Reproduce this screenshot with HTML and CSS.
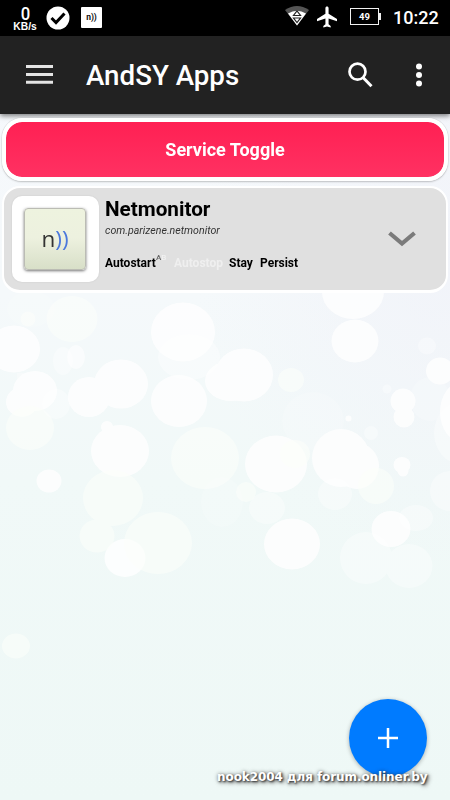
FILE: index.html
```html
<!DOCTYPE html>
<html lang="en">
<head>
<meta charset="utf-8">
<title>AndSY Apps</title>
<link rel="stylesheet" href="styles.css">
</head>
<body>
<div class="screen">
  <svg class="bokeh" viewBox="0 0 450 800" aria-hidden="true">
    <g fill="#fff">
      <g opacity=".8">
        <ellipse cx="14" cy="349" rx="26" ry="23.500"/>
        <path d="M17 373h21v15H17z" opacity=".4"/>
        <ellipse cx="183" cy="332" rx="32" ry="29.500"/>
        <ellipse cx="179" cy="401" rx="28" ry="26"/>
        <ellipse cx="244" cy="375" rx="29" ry="26.500"/>
        <ellipse cx="231" cy="381" rx="26" ry="20"/>
        <ellipse cx="355" cy="341" rx="23.500" ry="21.500"/>
        <ellipse cx="353" cy="292" rx="31" ry="27"/>
        <ellipse cx="120" cy="451" rx="29" ry="26"/>
        <circle cx="107" cy="427" r="6"/>
        <ellipse cx="49" cy="481" rx="12.500" ry="11.500"/>
        <ellipse cx="121" cy="384" rx="27" ry="24.500"/>
        <ellipse cx="89" cy="397" rx="21" ry="20"/>
        <ellipse cx="35" cy="391" rx="22" ry="20"/>
        <ellipse cx="22" cy="402" rx="16" ry="15"/>
        <ellipse cx="276" cy="464" rx="31" ry="28.500"/>
        <ellipse cx="341" cy="458" rx="29" ry="29"/>
        <ellipse cx="357" cy="466" rx="22" ry="23"/>
        <ellipse cx="403" cy="401" rx="12.500" ry="12.500"/>
        <ellipse cx="404" cy="417" rx="10.500" ry="10.500"/>
        <ellipse cx="402" cy="465" rx="8.500" ry="8"/>
        <circle cx="403" cy="471" r="5.500"/>
        <ellipse cx="440" cy="371" rx="14" ry="13.500"/>
        <ellipse cx="462" cy="412" rx="22" ry="30"/>
        <circle cx="348.500" cy="418.500" r="3"/>
        <ellipse cx="292" cy="544" rx="28" ry="25.500"/>
        <ellipse cx="391" cy="529" rx="19.500" ry="18"/>
        <ellipse cx="125" cy="558" rx="20.500" ry="19"/>
        <ellipse cx="76" cy="357" rx="9" ry="12" opacity=".7"/>
      </g>
      <g fill="#fcfffb" opacity=".6">
        <ellipse cx="72" cy="319" rx="25.500" ry="23"/>
        <ellipse cx="30" cy="428" rx="24" ry="22"/>
        <ellipse cx="205" cy="458" rx="34" ry="31"/>
        <ellipse cx="158" cy="543" rx="34" ry="31"/>
        <ellipse cx="113" cy="498" rx="30" ry="28"/>
        <ellipse cx="97" cy="536" rx="17.500" ry="16.500"/>
        <ellipse cx="16" cy="646" rx="14" ry="12.500"/>
        <ellipse cx="291" cy="380" rx="13" ry="12"/>
        <ellipse cx="376" cy="486" rx="18" ry="18"/>
        <circle cx="246" cy="492" r="10"/>
        <circle cx="28" cy="319" r="7.500"/>
        <ellipse cx="295" cy="454" rx="15" ry="14"/>
      </g>
      <g opacity=".36">
        <ellipse cx="63" cy="361" rx="10" ry="14"/>
        <ellipse cx="189" cy="357" rx="31" ry="23"/>
        <ellipse cx="56" cy="404" rx="14" ry="15"/>
        <ellipse cx="313" cy="421" rx="31" ry="29" opacity=".45"/>
        <ellipse cx="427" cy="346" rx="9" ry="8.500"/>
        <ellipse cx="430" cy="399" rx="20" ry="22" opacity=".6"/>
        <ellipse cx="461" cy="433" rx="27" ry="31"/>
        <circle cx="371" cy="433" r="7"/>
        <circle cx="387" cy="389" r="4.500"/>
        <ellipse cx="267" cy="508" rx="18" ry="16"/>
        <ellipse cx="335" cy="494" rx="17" ry="16"/>
        <ellipse cx="366" cy="558" rx="26" ry="26"/>
        <ellipse cx="409" cy="566" rx="23.500" ry="22"/>
        <ellipse cx="416" cy="518" rx="17" ry="13"/>
        <ellipse cx="450" cy="491" rx="20" ry="20"/>
        <ellipse cx="222" cy="502" rx="21" ry="25" opacity=".45"/>
        <ellipse cx="31" cy="309" rx="24" ry="18" opacity=".45"/>
      </g>
    </g>
  </svg>

  <header class="status">
    <div class="speed"><span class="speed-num">0</span><span class="speed-unit">KB/s</span></div>
    <svg class="check" viewBox="0 0 24 24"><circle cx="12" cy="12" r="11.500" fill="#fff"/><path d="M5.500 12l4.500 4.500 8.500-9" fill="none" stroke="#000" stroke-width="3"/></svg>
    <div class="mini">n))</div>
    <svg class="wifi" viewBox="0 0 24 20"><path d="M0 4Q12-4 24 4L12 19.500z" fill="#555"/><path d="M3 7.500Q12 2 21 7.500L12 19.500z" fill="#fff"/><path d="M8.500 9.500h7L12 5zM8.500 12h7L12 16.500z" fill="#fff" stroke="#222" stroke-width="1.200"/></svg>
    <svg class="plane" viewBox="2 2 19 20"><path fill="#fff" d="M21 16v-2l-8-5V3.500c0-.83-.67-1.500-1.500-1.500S10 2.670 10 3.500V9l-8 5v2l8-2.500V19l-2 1.500V22l3.500-1 3.500 1v-1.500L13 19v-5.500l8 2.500z"/></svg>
    <div class="battery">49</div>
    <div class="clock">10:22</div>
  </header>

  <nav class="appbar">
    <svg class="menu" viewBox="0 0 27 19"><path d="M0 1.500h27M0 9.500h27M0 17.300h27" stroke="#e4e4e4" stroke-width="3"/></svg>
    <h1 class="title">AndSY Apps</h1>
    <svg class="search" viewBox="0 0 25 26"><circle cx="9.500" cy="9.700" r="8" fill="none" stroke="#fff" stroke-width="2.700"/><path d="M15 15.500l8.500 8.700" stroke="#fff" stroke-width="3"/></svg>
    <svg class="more" viewBox="0 0 6 24"><circle cx="3" cy="3.500" r="3" fill="#fff"/><circle cx="3" cy="12" r="3" fill="#fff"/><circle cx="3" cy="20.500" r="3" fill="#fff"/></svg>
  </nav>

  <main class="content">
    <button class="toggle">Service Toggle</button>
    <section class="card">
      <div class="tile"><div class="app-icon">n<span class="waves">))</span></div></div>
      <div class="info">
        <h2 class="name">Netmonitor</h2>
        <p class="package">com.parizene.netmonitor</p>
        <div class="flags">
          <span class="start">Autostart</span><span class="sup">A<span class="sup-off">B</span></span>
          <span class="stop">Autostop</span><span class="stay">Stay</span><span class="persist">Persist</span>
        </div>
      </div>
      <svg class="chevron" viewBox="0 0 28 16"><path d="M1.500 2L14 12.500 26.500 2" fill="none" stroke="#7b7b7b" stroke-width="4.200"/></svg>
    </section>
  </main>

  <button class="fab" aria-label="Add"><svg class="plus" viewBox="0 0 20 20"><path d="M10 0v20M0 10h20" stroke="#fff" stroke-width="2.500"/></svg></button>
  <div class="credit">nook2004 для forum.onliner.by</div>
</div>
</body>
</html>
```

FILE: styles.css
```css
* { box-sizing: border-box; }
body { margin: 0; font-family: Roboto, sans-serif; }
svg { display: block; flex: none; }
button { border: 0; padding: 0; font-family: inherit; }

.screen {
  position: relative;
  width: 450px;
  height: 800px;
  overflow: hidden;
  background:
    radial-gradient(ellipse at 100% 32%, rgba(241, 243, 249, .9), rgba(241, 243, 249, 0) 40%),
    linear-gradient(180deg, #f6f8fc 0%, #f5f9fb 37%, #f1f9f8 60%, #eef8f6 100%);
}
.bokeh { position: absolute; left: 0; top: 0; width: 450px; height: 800px; }

.status {
  position: relative;
  display: flex;
  height: 36px;
  background: #000;
  color: #fff;
}
.speed { display: flex; flex-direction: column; align-items: center; width: 26px; margin-left: 12px; }
.speed-num { font-size: 19px; line-height: 15px; height: 15px; margin-top: 6px; font-weight: 500; transform: scaleX(.88); }
.speed-unit { margin-top: 1px; font: bold 10.300px/10px "Liberation Sans", sans-serif; white-space: nowrap; }
.check { width: 24px; height: 24px; margin: 6px 0 0 8px; }
.mini {
  width: 21px;
  height: 21px;
  margin: 7px 0 0 11px;
  border-radius: 1px;
  background: #fff;
  color: #111;
  font-size: 8.500px;
  font-weight: 700;
  line-height: 20px;
  text-align: center;
}
.wifi { width: 24px; height: 20px; margin: 6px 0 0 183px; }
.plane { width: 20px; height: 22px; margin: 6px 0 0 8px; }
.battery {
  position: relative;
  width: 29px;
  height: 17px;
  margin: 8px 0 0 13px;
  border: 1.500px solid #f2f2f2;
  font-size: 9.500px;
  font-weight: 700;
  line-height: 15px;
  text-align: center;
}
.battery::after { content: ""; position: absolute; right: -3px; top: 4px; width: 2px; height: 7px; background: #eee; }
.clock { margin: 6px 0 0 14px; font-size: 18px; line-height: 24px; font-weight: 500; }

.appbar {
  position: relative;
  display: flex;
  align-items: center;
  height: 78px;
  background: #222;
  box-shadow: 0 2px 5px rgba(0, 0, 0, .5);
}
.menu { width: 27px; height: 19px; margin-left: 26px; margin-top: -1px; }
.title { width: 230px; margin: 2px 0 0 33px; color: #fff; font-size: 27.700px; line-height: 36px; font-weight: 500; white-space: nowrap; }
.search { width: 25px; height: 26px; margin: -1px 0 0 32px; }
.more { width: 6px; height: 24px; margin: 0 0 0 43px; }

.content { position: relative; padding: 4px 2px 0; }
.toggle {
  display: block;
  width: 446px;
  height: 63px;
  border: 4px solid #fff;
  border-radius: 20px;
  background: linear-gradient(#ff2053, #ff3162) padding-box;
  box-shadow: 0 0 1px rgba(0, 0, 0, .35), 0 1px 2px rgba(0, 0, 0, .2);
  color: #fff;
  font-size: 18px;
  line-height: 56px;
  font-weight: 700;
}
.card {
  display: flex;
  height: 107px;
  margin-top: 5px;
  border: 2px solid #fff;
  border-bottom-width: 3px;
  border-radius: 18px;
  background: #e0e0e0;
}
.tile {
  display: flex;
  align-items: center;
  justify-content: center;
  flex: none;
  width: 87px;
  height: 86px;
  margin: 8px 0 0 8px;
  padding-right: 1px;
  border-radius: 10px;
  background: #fff;
  box-shadow: 0 0 2px rgba(0, 0, 0, .1);
}
.app-icon {
  width: 62px;
  height: 62px;
  border: 1px solid #bbbcb4;
  border-radius: 4px;
  background: linear-gradient(#eef3df, #edf1df 48%, #d8dfc8);
  box-shadow: 0 1px 3px rgba(0, 0, 0, .55);
  color: #333;
  font: 22.500px/60px "Open Sans", sans-serif;
  text-align: center;
}
.waves { color: #4b78dc; }
.info { width: 225px; margin-left: 6px; }
.name { margin: 9px 0 0; font-size: 20.700px; line-height: 25px; font-weight: 700; color: #000; }
.package { margin: 1px 0 0; font-size: 10.600px; line-height: 15px; font-style: italic; color: #333; }
.flags { display: flex; margin-top: 17px; font-size: 12px; line-height: 16px; font-weight: 700; color: #000; }
.start { width: 51px; }
.sup { width: 18px; margin-top: -5px; font-size: 8px; font-weight: 500; color: #666; }
.sup-off { color: #f2f2f2; }
.stop { width: 55px; color: #efefef; }
.stay { width: 31px; }
.chevron { width: 28px; height: 16px; margin: 43px 0 0 58px; }

.fab {
  position: absolute;
  left: 349px;
  top: 699px;
  display: flex;
  align-items: center;
  justify-content: center;
  width: 78px;
  height: 78px;
  border-radius: 50%;
  background: #007bff;
  box-shadow: 0 1px 4px rgba(0, 0, 0, .3);
}
.plus { width: 20px; height: 20px; }
.credit {
  position: absolute;
  left: 217px;
  top: 769px;
  color: #fff;
  font: bold 12px/17px "DejaVu Sans", sans-serif;
  letter-spacing: -.08px;
  white-space: nowrap;
  text-shadow: 1px 1px 2px #333, 2px 2px 4px #666, 0 0 4px rgba(0, 0, 0, .4);
}
```
